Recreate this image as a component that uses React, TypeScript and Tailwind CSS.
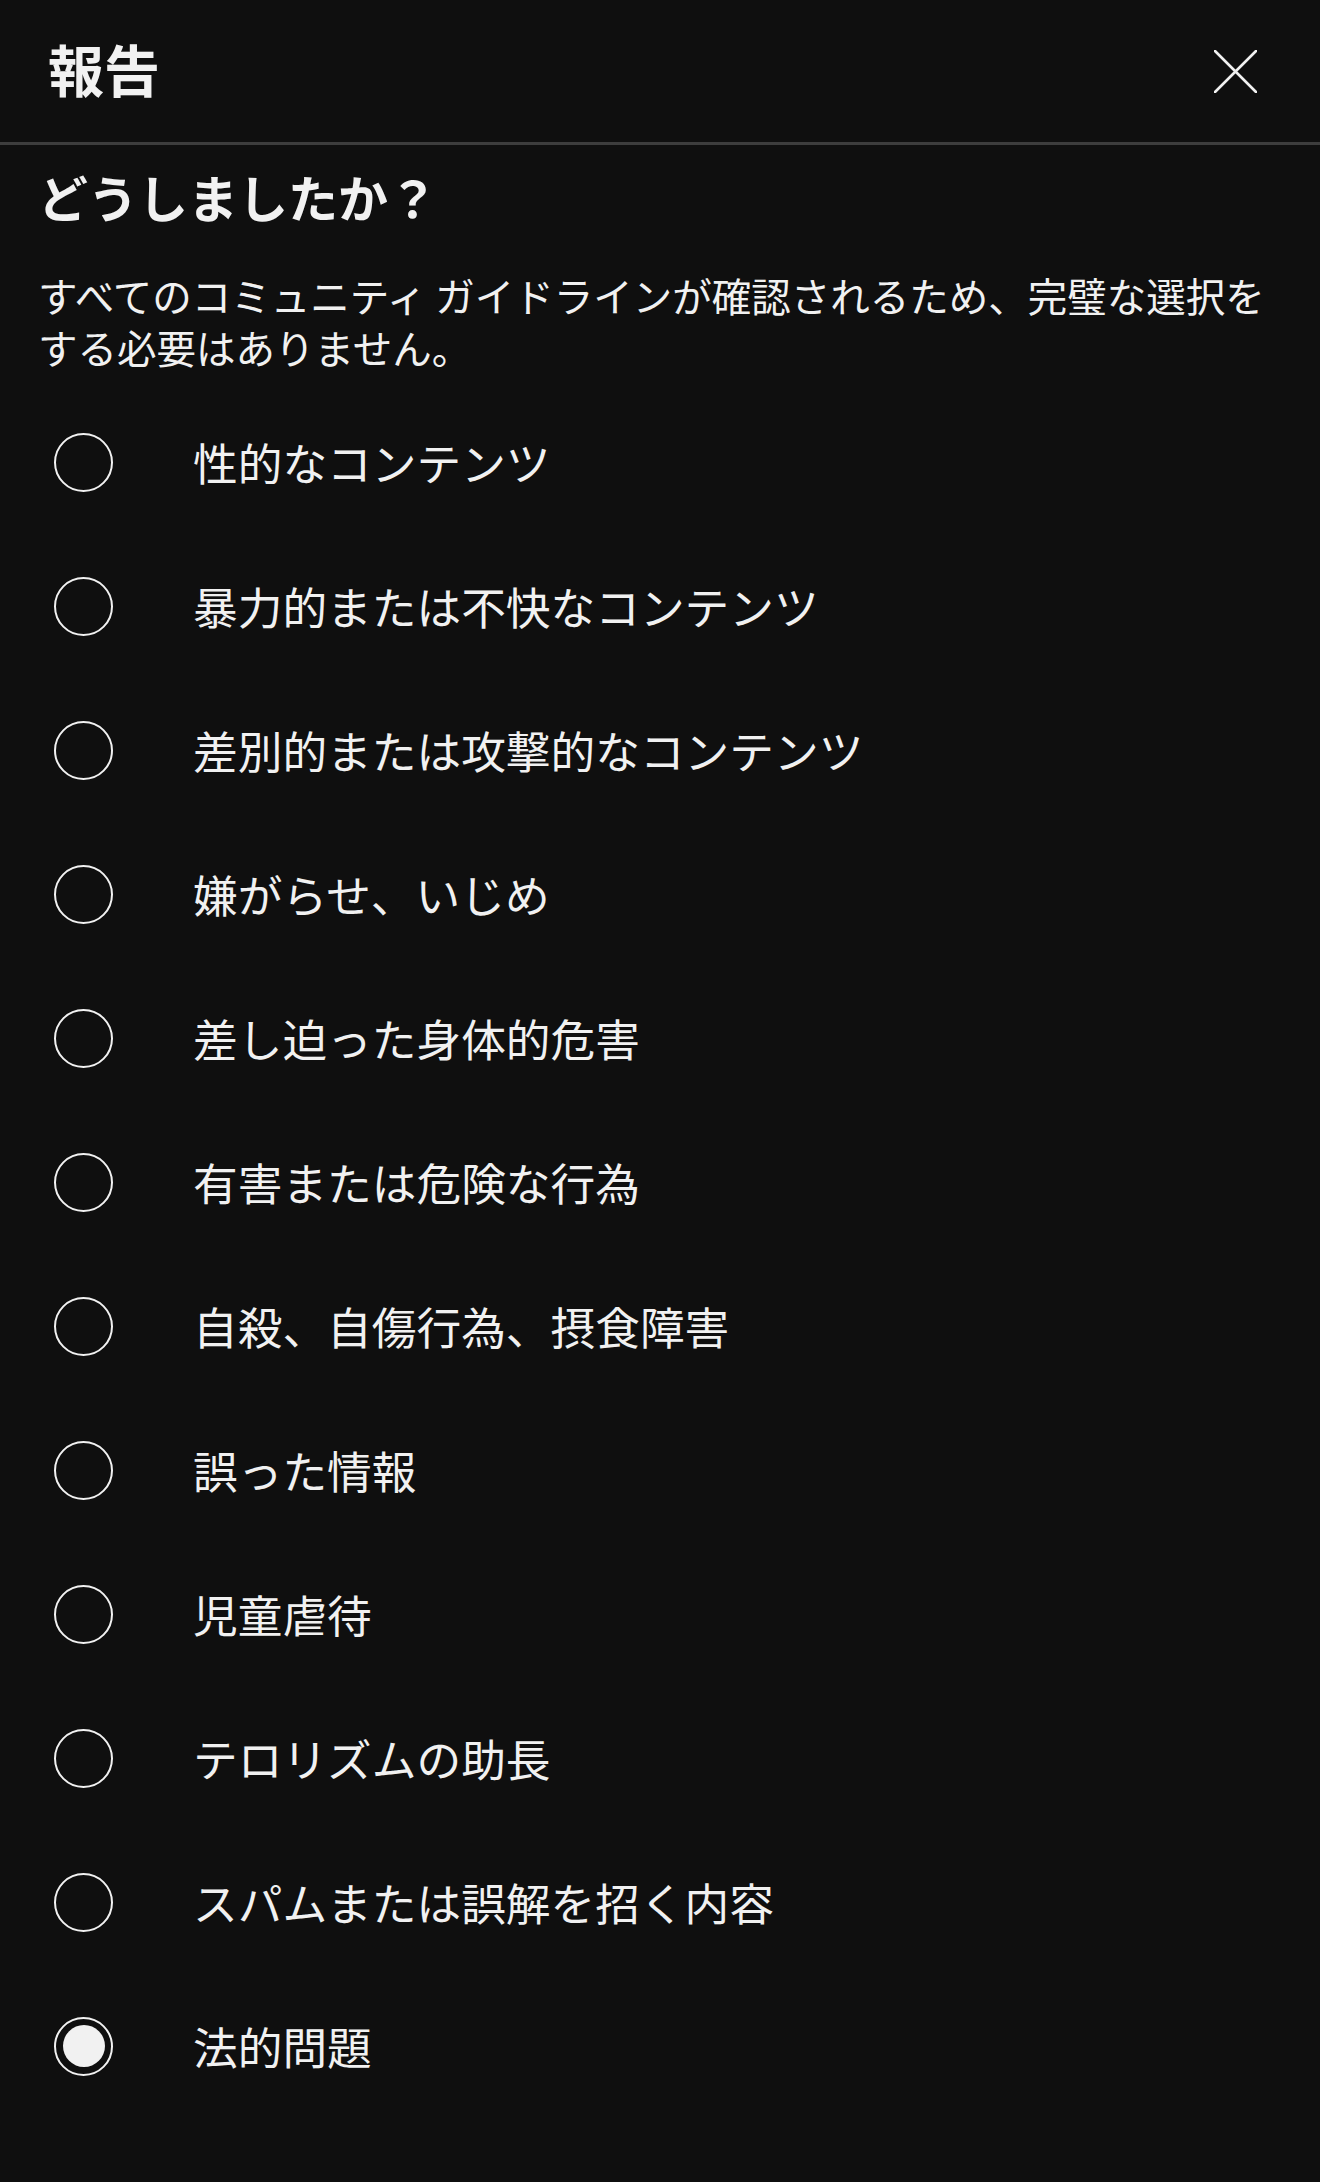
import { useState } from "react";

const reasons = [
  "性的なコンテンツ",
  "暴力的または不快なコンテンツ",
  "差別的または攻撃的なコンテンツ",
  "嫌がらせ、いじめ",
  "差し迫った身体的危害",
  "有害または危険な行為",
  "自殺、自傷行為、摂食障害",
  "誤った情報",
  "児童虐待",
  "テロリズムの助長",
  "スパムまたは誤解を招く内容",
  "法的問題",
];

export default function App() {
  const [selected, setSelected] = useState(11);

  return (
    <div
      className="min-h-screen bg-[#0f0f0f] text-[#f1f1f1]"
      style={{ fontFamily: '"Noto Sans CJK JP", "Noto Sans", sans-serif' }}
    >
      {/* Header */}
      <div className="flex h-[145px] items-center justify-between border-b-[3px] border-[#3d3d3d] pl-[48px] pr-[63px]">
        <h1 className="pb-[6px] text-[56px] font-bold leading-none">報告</h1>
        <button aria-label="閉じる" className="flex h-[43px] w-[43px] items-center justify-center">
          <svg width="43" height="43" viewBox="0 0 43 43" fill="none">
            <path d="M1 1L42 42M42 1L1 42" stroke="#f1f1f1" strokeWidth="2.6" strokeLinecap="round" />
          </svg>
        </button>
      </div>

      <div className="px-[38px]">
        <h2 className="mt-[21px] text-[50px] font-bold leading-[60px]">どうしましたか？</h2>
        <p className="mt-[43px] text-[39.5px] leading-[52px]">
          すべてのコミュニティ ガイドラインが確認されるため、完璧な選択をする必要はありません。
        </p>

        <ul className="mt-[17px]">
          {reasons.map((label, i) => {
            const on = selected === i;
            return (
              <li key={label}>
                <button
                  onClick={() => setSelected(i)}
                  className="flex h-[144px] w-full items-center text-left"
                >
                  <span className="ml-[16px] flex h-[59px] w-[59px] shrink-0 items-center justify-center rounded-full border-[2.5px] border-[#f1f1f1]">
                    {on && <span className="h-[42px] w-[42px] rounded-full bg-[#f1f1f1]" />}
                  </span>
                  <span className="ml-[80px] text-[44.7px] leading-none">{label}</span>
                </button>
              </li>
            );
          })}
        </ul>
      </div>
    </div>
  );
}
